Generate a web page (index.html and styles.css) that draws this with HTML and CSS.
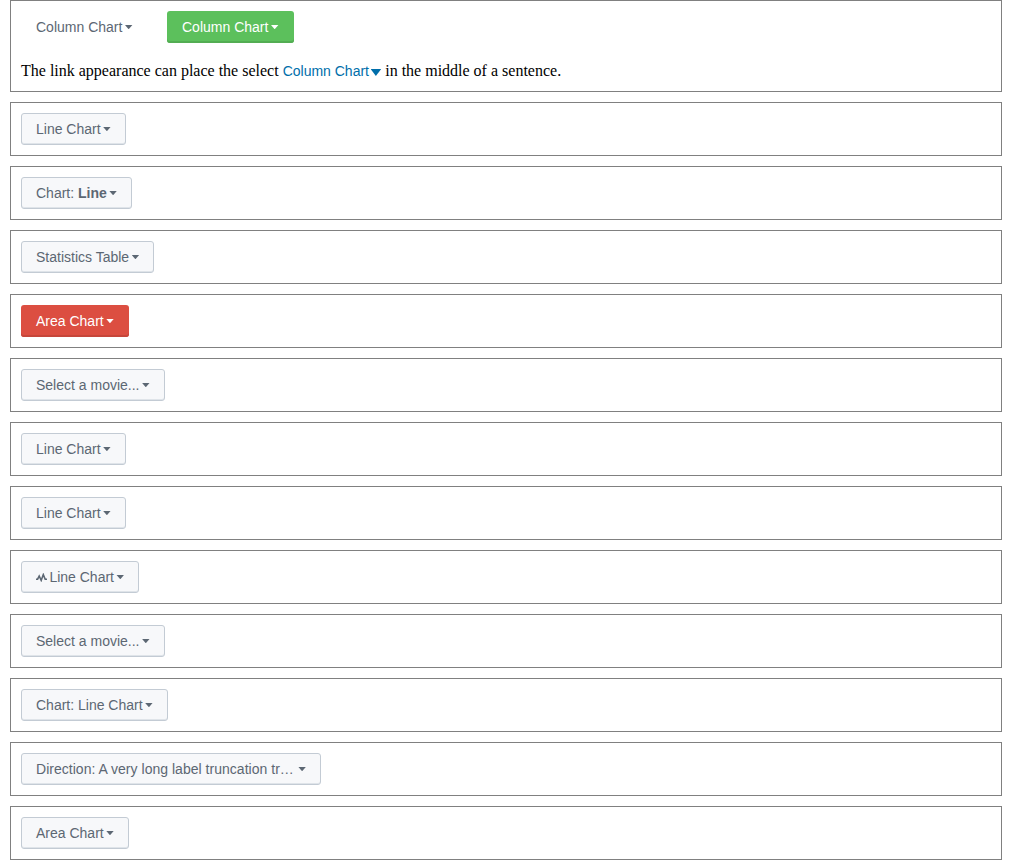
FILE: index.html
```html
<!DOCTYPE html>
<html lang="en">
<head>
<meta charset="utf-8">
<title>Select examples</title>
<link rel="stylesheet" href="styles.css">
</head>
<body>
<main class="examples">
  <section class="example">
    <div class="row">
      <button class="select select-pill"><span class="label">Column Chart</span><span class="caret"></span></button>
      <button class="select select-primary"><span class="label">Column Chart</span><span class="caret"></span></button>
    </div>
    <p class="sentence">The link appearance can place the select <a class="select-link">Column Chart<span class="caret caret-link"></span></a> in the middle of a sentence.</p>
  </section>
  <section class="example"><button class="select"><span class="label">Line Chart</span><span class="caret"></span></button></section>
  <section class="example"><button class="select"><span class="label">Chart: <b>Line</b></span><span class="caret"></span></button></section>
  <section class="example"><button class="select"><span class="label">Statistics Table</span><span class="caret"></span></button></section>
  <section class="example"><button class="select select-error"><span class="label">Area Chart</span><span class="caret"></span></button></section>
  <section class="example"><button class="select"><span class="label">Select a movie...</span><span class="caret"></span></button></section>
  <section class="example"><button class="select"><span class="label">Line Chart</span><span class="caret"></span></button></section>
  <section class="example"><button class="select"><span class="label">Line Chart</span><span class="caret"></span></button></section>
  <section class="example"><button class="select"><svg class="icon" viewBox="0 0 11 9"><path d="M0 6.2H1.6L3.2 3L5.2 7.4L7.3 1.6L9.2 6.2H11"/></svg><span class="label">Line Chart</span><span class="caret"></span></button></section>
  <section class="example"><button class="select"><span class="label">Select a movie...</span><span class="caret"></span></button></section>
  <section class="example"><button class="select"><span class="label">Chart: Line Chart</span><span class="caret"></span></button></section>
  <section class="example"><button class="select select-wide"><span class="label">Direction: A very long label truncation tr…</span><span class="caret"></span></button></section>
  <section class="example"><button class="select"><span class="label">Area Chart</span><span class="caret"></span></button></section>
</main>
</body>
</html>
```
FILE: styles.css
```css
* { box-sizing: border-box; }
body { margin: 0; background: #fff; }
.examples { display: flex; flex-direction: column; gap: 10px; padding: 0 10px; }
.example { border: 1px solid #808080; padding: 10px; }
.row { display: flex; gap: 19px; }
.row .select { width: 127px; }
.select {
  display: flex;
  align-items: center;
  height: 32px;
  margin: 0;
  padding: 0 14px;
  border: 1px solid #c3cbd4;
  border-radius: 3px;
  background: #f7f8fa;
  box-shadow: inset 0 -1px 0 #dfe4e9;
  color: #5c6773;
  font: 14px/20px "Liberation Sans", Arial, sans-serif;
  white-space: nowrap;
}
.select-pill { border-color: transparent; background: none; box-shadow: none; }
.select-primary, .select-error { border: 0; padding: 0 15px; color: #fff; }
.select-primary { background: #5cc05c; box-shadow: inset 0 -2px 0 #53ad53; }
.select-error { background: #dc4e41; box-shadow: inset 0 -2px 0 #c6463a; }
.select-wide { width: 300px; justify-content: space-between; }
.select-wide .label { letter-spacing: 0.025px; }
.caret {
  flex: none;
  width: 7.8px;
  height: 4.6px;
  margin-left: 2.4px;
  background: currentColor;
  clip-path: polygon(0 0, 100% 0, 50% 100%);
}
.icon { flex: none; width: 11px; height: 9px; margin-right: 2.4px; fill: none; stroke: currentColor; stroke-width: 1.6; }
.sentence { margin: 18px 0 0; height: 20px; font: 16px/19px "Liberation Serif", "Times New Roman", serif; color: #000; white-space: nowrap; }
.select-link { color: #006eaa; font: 14px/19px "Liberation Sans", Arial, sans-serif; }
.caret-link { display: inline-block; width: 10.6px; height: 7px; margin-left: 1.6px; }
```
